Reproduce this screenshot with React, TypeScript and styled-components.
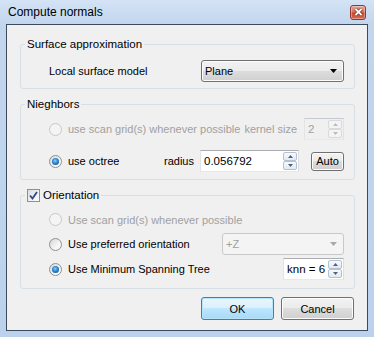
import styled, { createGlobalStyle, css } from 'styled-components';

const GlobalStyle = createGlobalStyle`
  html, body { margin: 0; padding: 0; }
  body {
    font-family: "Liberation Sans", Arial, sans-serif;
    font-size: 11px;
    color: #000;
  }
  * { box-sizing: border-box; }
`;

const Window = styled.div`
  width: 374px;
  height: 337px;
  display: flex;
  flex-direction: column;
  padding: 0 6px 6px;
  background: linear-gradient(#d4e3f5, #c2d6ee 24px, #bcd2ec);
`;

const TitleBar = styled.div`
  height: 24px;
  display: flex;
  align-items: center;
  justify-content: space-between;
  padding: 0 2px 0 2px;
`;

const Title = styled.span`
  font-size: 12px;
  color: #000;
`;

const CloseButton = styled.div`
  width: 16px;
  height: 15px;
  border: 1px solid #8b3a30;
  border-radius: 3px;
  display: flex;
  align-items: center;
  justify-content: center;
  background: linear-gradient(#e9a493 0%, #d8735e 45%, #c44a33 55%, #d46a4f 100%);
  box-shadow: inset 0 0 0 1px rgba(255, 255, 255, 0.35);
`;

const Client = styled.div`
  flex: 1;
  border: 1px solid #3c4a5c;
  background: #f0f0f0;
  padding: 12px 12px 0 13px;
  display: flex;
  flex-direction: column;
  gap: 8px;
`;

const Group = styled.fieldset<{ $pt: number; $pb: number; $gap?: number }>`
  margin: 0;
  min-width: 0;
  border: 1px solid #d5dfe5;
  border-radius: 3px;
  padding: ${p => p.$pt}px 10px ${p => p.$pb}px 4px;
  display: flex;
  flex-direction: column;
  gap: ${p => p.$gap ?? 0}px;
`;

const Legend = styled.legend`
  padding: 0 2px;
  line-height: 15px;
  height: 15px;
  display: flex;
  align-items: center;
  gap: 3px;
  font-size: 11.5px;
`;

const Row = styled.div<{ $h?: number }>`
  height: ${p => p.$h ?? 22}px;
  display: flex;
  align-items: center;
  padding-left: 24px;
`;

const Text = styled.span<{ $disabled?: boolean; $push?: boolean; $gap?: number }>`
  color: ${p => (p.$disabled ? '#a0a0a0' : '#000')};
  white-space: nowrap;
  margin-right: ${p => p.$gap ?? 0}px;
  ${p => p.$push && css`margin-left: auto;`}
`;

const Option = styled.label<{ $disabled?: boolean }>`
  display: flex;
  align-items: center;
  gap: 6px;
  color: ${p => (p.$disabled ? '#a0a0a0' : '#000')};
  white-space: nowrap;
`;

const RadioCircle = styled.span<{ $checked?: boolean; $disabled?: boolean }>`
  width: 13px;
  height: 13px;
  flex: none;
  border-radius: 50%;
  display: flex;
  align-items: center;
  justify-content: center;
  border: 1px solid ${p => (p.$disabled ? '#c8c8c8' : '#8e8f8f')};
  background: ${p =>
    p.$disabled ? '#f4f4f4' : 'linear-gradient(135deg, #d7d7d7, #f4f4f4 60%, #ffffff)'};
  &::after {
    content: '';
    display: ${p => (p.$checked ? 'block' : 'none')};
    width: 7px;
    height: 7px;
    border-radius: 50%;
    background: radial-gradient(circle at 45% 40%, #8fd0f8 0%, #2a86d0 45%, #0f3f7a 100%);
  }
`;

const CheckBox = styled.span`
  width: 13px;
  height: 13px;
  flex: none;
  border: 1px solid #8e8f8f;
  background: linear-gradient(135deg, #dcdcdc, #ffffff);
  display: flex;
  align-items: center;
  justify-content: center;
`;

const Combo = styled.div<{ $w: number; $disabled?: boolean }>`
  width: ${p => p.$w}px;
  height: 22px;
  margin-left: auto;
  display: flex;
  align-items: center;
  justify-content: space-between;
  padding: 0 6px 0 3px;
  border-radius: 3px;
  ${p =>
    p.$disabled
      ? css`
          border: 1px solid #c9c9c9;
          background: #f4f4f4;
          color: #a0a0a0;
        `
      : css`
          border: 1px solid #707070;
          background: linear-gradient(#f2f2f2 0%, #ebebeb 50%, #dddddd 50%, #cfcfcf 100%);
          box-shadow: inset 0 0 0 1px #fcfcfc;
          color: #000;
        `}
`;

const Spin = styled.div<{ $w: number; $disabled?: boolean }>`
  width: ${p => p.$w}px;
  height: 22px;
  flex: none;
  display: flex;
  padding: 1px;
  border: 1px solid;
  border-color: ${p =>
    p.$disabled ? '#c6cad0 #dfe2e6 #e6e9ec #e2e4e7' : '#abadb3 #dbdfe6 #e3e9ef #e2e3ea'};
  background: ${p => (p.$disabled ? '#f0f0f0' : '#fff')};
  color: ${p => (p.$disabled ? '#a0a0a0' : '#000')};
`;

const SpinValue = styled.span`
  flex: 1;
  display: flex;
  align-items: center;
  padding-left: 2px;
  white-space: nowrap;
  overflow: hidden;
  font-size: 11.5px;
`;

const SpinButtons = styled.div`
  width: 14px;
  display: flex;
  flex-direction: column;
`;

const SpinStep = styled.div<{ $disabled?: boolean }>`
  flex: 1;
  display: flex;
  align-items: center;
  justify-content: center;
  border: 1px solid ${p => (p.$disabled ? '#d6d9dd' : '#b5c1d0')};
  border-radius: 2px;
  background: ${p => (p.$disabled ? '#f4f4f4' : 'linear-gradient(#f8fafc, #e3e9f0)')};
`;

const PushButton = styled.button<{ $default?: boolean; $w: number; $h: number }>`
  width: ${p => p.$w}px;
  height: ${p => p.$h}px;
  flex: none;
  padding: 0;
  font: inherit;
  color: #000;
  border-radius: 3px;
  border: 1px solid #707070;
  background: linear-gradient(#f2f2f2 0%, #ebebeb 50%, #dddddd 50%, #cfcfcf 100%);
  box-shadow: inset 0 0 0 1px #fcfcfc;
  ${p =>
    p.$default &&
    css`
      border-color: #3c7fb1;
      background: linear-gradient(#eaf6fd 0%, #d9f0fc 50%, #bee6fd 50%, #a7d9f5 100%);
      box-shadow: inset 0 0 0 1px #b6e4fb;
    `}
`;

const AutoButton = styled(PushButton)`
  margin-left: 12px;
`;

const ButtonRow = styled.div`
  display: flex;
  justify-content: flex-end;
  gap: 7px;
  padding-right: 1px;
`;

const Arrow = ({ color }: { color: string }) => (
  <svg width="7" height="4" viewBox="0 0 7 4">
    <path d="M0 0 L7 0 L3.5 4 Z" fill={color} />
  </svg>
);

const SmallArrow = ({ dir, disabled }: { dir: 'up' | 'down'; disabled?: boolean }) => (
  <svg width="5" height="3" viewBox="0 0 5 3">
    <path
      d={dir === 'up' ? 'M2.5 0 L5 3 L0 3 Z' : 'M0 0 L5 0 L2.5 3 Z'}
      fill={disabled ? '#b8bdc4' : '#4d6185'}
    />
  </svg>
);

const Radio = ({ label, checked, disabled }: { label: string; checked?: boolean; disabled?: boolean }) => (
  <Option $disabled={disabled}>
    <RadioCircle $checked={checked} $disabled={disabled} />
    {label}
  </Option>
);

const SpinBox = ({ value, width, disabled }: { value: string; width: number; disabled?: boolean }) => (
  <Spin $w={width} $disabled={disabled}>
    <SpinValue>{value}</SpinValue>
    <SpinButtons>
      <SpinStep $disabled={disabled}>
        <SmallArrow dir="up" disabled={disabled} />
      </SpinStep>
      <SpinStep $disabled={disabled}>
        <SmallArrow dir="down" disabled={disabled} />
      </SpinStep>
    </SpinButtons>
  </Spin>
);

export default function App() {
  return (
    <>
      <GlobalStyle />
      <Window>
        <TitleBar>
          <Title>Compute normals</Title>
          <CloseButton>
            <svg width="9" height="8" viewBox="0 0 9 8">
              <path d="M1.5 1 L7.5 7 M7.5 1 L1.5 7" stroke="#6e2a22" strokeWidth="3.2" />
              <path d="M1.5 1 L7.5 7 M7.5 1 L1.5 7" stroke="#ffffff" strokeWidth="1.8" />
            </svg>
          </CloseButton>
        </TitleBar>
        <Client>
          <Group $pt={8} $pb={6}>
            <Legend>Surface approximation</Legend>
            <Row>
              <Text>Local surface model</Text>
              <Combo $w={143}>
                <span>Plane</span>
                <Arrow color="#000" />
              </Combo>
            </Row>
          </Group>

          <Group $pt={6} $pb={7} $gap={10}>
            <Legend>Nieghbors</Legend>
            <Row>
              <Radio label="use scan grid(s) whenever possible" disabled />
              <Text $disabled $push $gap={7}>kernel size</Text>
              <SpinBox value="2" width={40} disabled />
            </Row>
            <Row>
              <Radio label="use octree" checked />
              <Text $push $gap={6}>radius</Text>
              <SpinBox value="0.056792" width={99} />
              <AutoButton $w={33} $h={19}>Auto</AutoButton>
            </Row>
          </Group>

          <Group $pt={6} $pb={8} $gap={3}>
            <Legend>
              <CheckBox>
                <svg width="9" height="9" viewBox="0 0 9 9">
                  <path d="M1 4.5 L3.5 7.5 L8 1" fill="none" stroke="#2b4a8c" strokeWidth="1.8" />
                </svg>
              </CheckBox>
              Orientation
            </Legend>
            <Row $h={21}>
              <Radio label="Use scan grid(s) whenever possible" disabled />
            </Row>
            <Row>
              <Radio label="Use preferred orientation" />
              <Combo $w={122} $disabled>
                <span>+Z</span>
                <Arrow color="#a8a8a8" />
              </Combo>
            </Row>
            <Row>
              <Radio label="Use Minimum Spanning Tree" checked />
              <Text $push />
              <SpinBox value="knn = 6" width={61} />
            </Row>
          </Group>

          <ButtonRow>
            <PushButton $default $w={73} $h={23}>OK</PushButton>
            <PushButton $w={73} $h={23}>Cancel</PushButton>
          </ButtonRow>
        </Client>
      </Window>
    </>
  );
}
